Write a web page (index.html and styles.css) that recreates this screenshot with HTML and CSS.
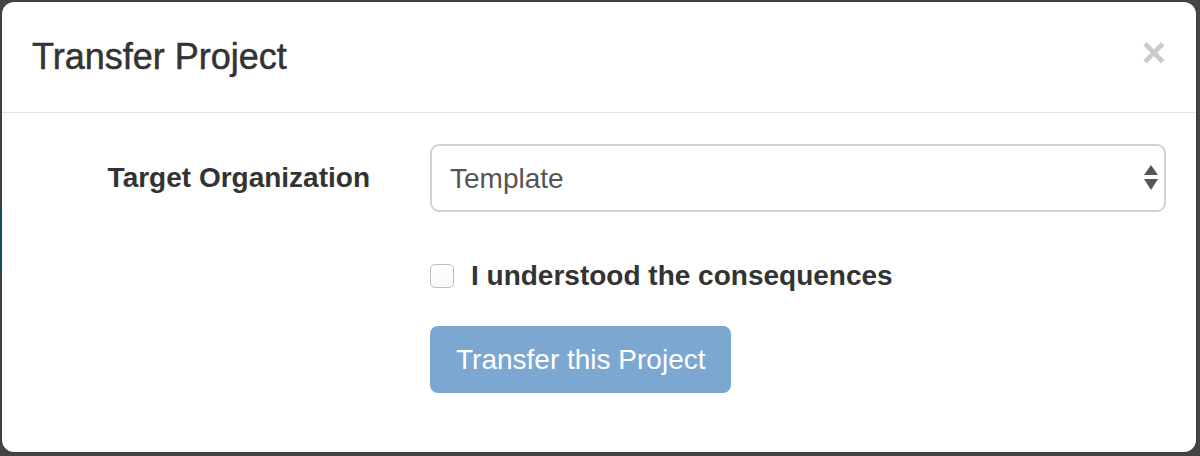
FILE: index.html
```html
<!DOCTYPE html>
<html lang="en">
<head>
<meta charset="utf-8">
<title>Transfer Project</title>
<link rel="stylesheet" href="styles.css">
</head>
<body>
<div class="backdrop">
  <div class="page-strip"></div>
  <div class="modal">
    <div class="modal-header">
      <h4 class="modal-title">Transfer Project</h4>
      <button class="close" type="button" aria-label="Close">×</button>
    </div>
    <div class="modal-body">
      <form class="form-horizontal">
        <div class="form-group">
          <label class="control-label" for="org">Target Organization</label>
          <div class="control">
            <div class="select-wrap">
              <select id="org" class="form-control">
                <option>Template</option>
              </select>
              <svg class="select-arrows" width="14" height="26" viewBox="0 0 14 26" aria-hidden="true">
                <polygon points="7,0 14,10 0,10" fill="#555"/>
                <polygon points="0,14 14,14 7,25" fill="#555"/>
              </svg>
            </div>
          </div>
        </div>
        <div class="form-group">
          <div class="control offset">
            <label class="checkbox"><input type="checkbox"><span>I understood the consequences</span></label>
          </div>
        </div>
        <div class="form-group">
          <div class="control offset">
            <button type="button" class="btn" disabled>Transfer this Project</button>
          </div>
        </div>
      </form>
    </div>
  </div>
</div>
</body>
</html>
```
FILE: styles.css
```css
* { box-sizing: border-box; }
html, body {
  margin: 0;
  padding: 0;
  background: #454545;
  font-family: "Liberation Sans", Arial, Helvetica, sans-serif;
  color: #333;
}
.backdrop {
  position: relative;
  width: 1200px;
  height: 456px;
  padding: 2px 4px 0 2px;
}
.page-strip {
  position: absolute;
  left: 0;
  top: 208px;
  width: 2px;
  height: 68px;
  background: #1c4a55;
}
.modal {
  width: 1194px;
  background: #fff;
  border-radius: 12px;
  box-shadow: 0 0 2px rgba(0,0,0,.4);
}
.modal-header {
  display: flex;
  align-items: flex-start;
  justify-content: space-between;
  padding: 30px;
  border-bottom: 1px solid #e5e5e5;
}
.modal-title {
  margin: 0;
  font-size: 36px;
  font-weight: 400;
  line-height: 50px;
  color: #333;
  -webkit-text-stroke: 0.5px #333;
}
.close {
  margin: 0;
  padding: 0;
  border: 0;
  background: transparent;
  font-family: "Liberation Sans", Arial, sans-serif;
  font-size: 42px;
  font-weight: 700;
  line-height: 42px;
  color: #000;
  opacity: .2;
  cursor: pointer;
}
.modal-body {
  padding: 31px 30px 0 30px;
}
.form-group {
  display: flex;
  margin-bottom: 30px;
}
.form-horizontal {
  padding-bottom: 29px;
}
.control-label {
  width: 368px;
  flex: none;
  text-align: right;
  padding-top: 14px;
  padding-right: 30px;
  font-size: 28px;
  font-weight: 700;
  line-height: 40px;
  color: #333;
}
.control {
  flex: 1;
  padding-left: 30px;
}
.control.offset {
  margin-left: 368px;
}
.select-wrap {
  position: relative;
}
.form-control {
  display: block;
  width: 100%;
  height: 68px;
  padding: 0 60px 0 18px;
  font-family: "Liberation Sans", Arial, sans-serif;
  font-size: 28px;
  color: #555;
  background: #fff;
  border: 2px solid #d2d2d2;
  border-radius: 9px;
  -webkit-appearance: none;
  appearance: none;
  outline: none;
}
.select-arrows {
  position: absolute;
  right: 8px;
  top: 21px;
  pointer-events: none;
}
.checkbox {
  display: flex;
  align-items: center;
  padding-top: 14px;
  min-height: 54px;
  font-size: 28px;
  font-weight: 700;
  line-height: 40px;
  color: #333;
}
.checkbox input {
  -webkit-appearance: none;
  appearance: none;
  width: 24px;
  height: 24px;
  margin: 0 17px 0 0;
  border: 1.5px solid #bdbdbd;
  border-radius: 5px;
  background: linear-gradient(#fff, #f7f7f7);
}
.btn {
  display: inline-block;
  height: 67px;
  padding: 0 24px;
  font-family: "Liberation Sans", Arial, sans-serif;
  font-size: 28px;
  line-height: 40px;
  color: #fff;
  background: #7ba7d1;
  border: 2px solid #7ba7d1;
  border-radius: 8px;
  cursor: not-allowed;
}
```
